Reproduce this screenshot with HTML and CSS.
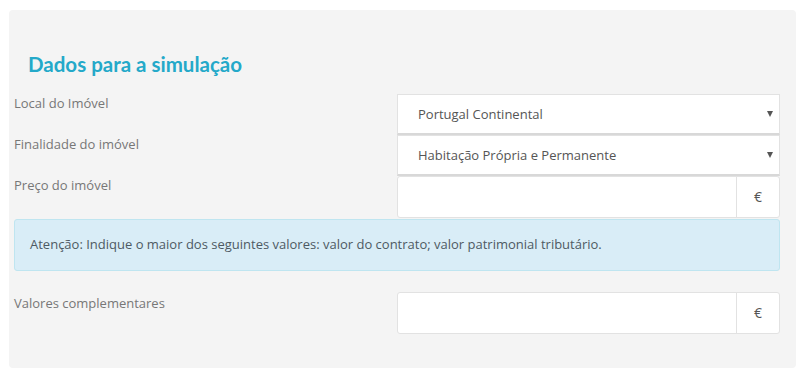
FILE: index.html
```html
<!DOCTYPE html>
<html lang="pt">
<head>
    <meta charset="UTF-8">
    <title>Dados para a simulação</title>
    <link rel="stylesheet" href="styles.css">
</head>
<body>
    <div class="panel">
        <h2 class="title">Dados para a simulação</h2>
        <form class="sim-form">
            <div class="row">
                <label>Local do Imóvel</label>
                <div class="select">Portugal Continental<span class="caret"></span></div>
            </div>
            <div class="row">
                <label>Finalidade do imóvel</label>
                <div class="select">Habitação Própria e Permanente<span class="caret"></span></div>
            </div>
            <div class="row">
                <label>Preço do imóvel</label>
                <div class="input-group">
                    <input type="text">
                    <span class="addon">€</span>
                </div>
            </div>
            <div class="alert">Atenção: Indique o maior dos seguintes valores: valor do contrato; valor patrimonial tributário.</div>
            <div class="row row-last">
                <label>Valores complementares</label>
                <div class="input-group">
                    <input type="text">
                    <span class="addon">€</span>
                </div>
            </div>
        </form>
    </div>
</body>
</html>
```

FILE: styles.css
```css
body {
    margin: 0;
    font-family: "Open Sans", Lato, sans-serif;
    background: #fff;
}
.panel {
    margin: 10px 11px 9px 9px;
    padding: 40px 16px 35px 5px;
    background: #f4f4f4;
    border-radius: 4px;
    height: 283px;
}
.title {
    margin: 0 0 16px 14px;
    font-family: Lato, sans-serif;
    font-size: 20.5px;
    font-weight: 700;
    color: #24a9c9;
    line-height: 28px;
}
.row {
    display: grid;
    grid-template-columns: 383px 1fr;
}
.row label {
    font-size: 13px;
    color: #777;
    line-height: 19px;
}
.select {
    position: relative;
    box-sizing: border-box;
    height: 41px;
    line-height: 39px;
    padding-left: 20px;
    background: #fff;
    border: 1px solid #e2e2e2;
    border-bottom: 2px solid #d8d8d8;
    font-size: 13px;
    color: #555;
}
.caret {
    position: absolute;
    right: 6px;
    top: 16px;
    border-left: 3.5px solid transparent;
    border-right: 3.5px solid transparent;
    border-top: 6px solid #555;
}
.input-group {
    display: flex;
    box-sizing: border-box;
    height: 42px;
    background: #fff;
    border: 1px solid #e2e2e2;
    border-radius: 3px;
}
.input-group input {
    flex: 1;
    border: none;
    background: transparent;
    min-width: 0;
    padding: 0 10px;
}
.addon {
    width: 42px;
    border-left: 1px solid #e2e2e2;
    text-align: center;
    line-height: 40px;
    font-size: 14px;
    color: #555;
}
.alert {
    margin-top: 1px;
    height: 52px;
    line-height: 49px;
    box-sizing: border-box;
    padding-left: 15px;
    background: #d9edf7;
    border: 1px solid #bfe5f0;
    border-radius: 3px;
    font-size: 13px;
    color: #4e5a63;
}
.row-last {
    margin-top: 21px;
}
.row-last label {
    padding-top: 2px;
}
```
